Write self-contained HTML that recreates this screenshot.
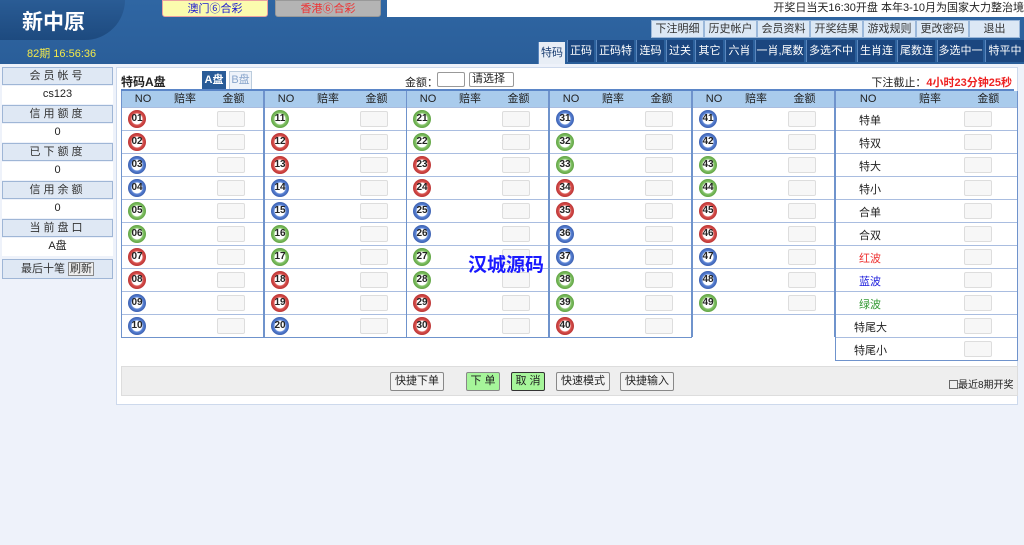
<!DOCTYPE html>
<html><head><meta charset="utf-8">
<style>
*{margin:0;padding:0;box-sizing:border-box}
body{width:1024px;height:545px;background:#eef2fa;font-family:"Liberation Sans","Noto Sans CJK SC",sans-serif;font-size:11px;color:#222;position:relative;overflow:hidden}
.a{position:absolute}
#hdr{left:0;top:0;width:1024px;height:64px;background:linear-gradient(#2f66a3,#2a5e99)}
#logo{left:0;top:0;width:125px;height:40px;background:linear-gradient(#2a5c95,#1d4a7f);border-bottom-right-radius:40px 40px}
#logo span{position:absolute;left:22px;top:6px;color:#fff;font-size:21px;font-weight:bold}
.tb{top:0;height:17px;border-radius:0 0 3px 3px;text-align:center;font-size:11px;line-height:16px}
#ticker{left:387px;top:0;width:637px;height:17px;background:#fff;font-size:11px;line-height:17px;text-align:right;white-space:nowrap;overflow:hidden}
.n1{top:20px;height:18px;background:#dce8f5;border:1px solid #9bb8da;text-align:center;line-height:16px;color:#333;font-size:11px}
.n2{top:40px;height:22px;background:#1b467f;color:#fff;text-align:center;line-height:22px;font-size:11px;border-left:1px solid #5a86bd}
#side{left:2px;top:67px;width:111px}
.sh{height:18px;background:#dfe8f4;border:1px solid #9fb6d6;text-align:center;line-height:17px;color:#333;letter-spacing:3px;margin-bottom:1px}
.sv{height:18px;background:#fff;text-align:center;line-height:17px;margin-bottom:1px}
#main{left:116px;top:67px;width:902px;height:338px;background:#fff;border:1px solid #cdd9ec}
.col{top:91px;width:143px;border:1px solid #6f93cc;border-top:none}
.col .h{height:16px;background:#a9cbec;display:flex;font-size:11px;line-height:16px}
.col .r{height:23px;border-top:1px solid #a9bde0;position:relative}
.b{position:absolute;left:6px;top:2px;width:18px;height:18px;border-radius:50%;font-size:10px;font-weight:bold;text-align:center;line-height:18px;color:#222}
.R{background:radial-gradient(circle,#fff 0 5px,#d9534f 6px,#b33 9px)}
.B{background:radial-gradient(circle,#fff 0 5px,#5b84d6 6px,#3a5fb0 9px)}
.G{background:radial-gradient(circle,#fff 0 5px,#86c46a 6px,#5ea341 9px)}
.i{position:absolute;left:95px;top:3px;width:28px;height:16px;border:1px solid #ddd;border-radius:2px;background:#f7f7f7}
.t{position:absolute;left:23px;top:4px}
.btn{top:372px;height:19px;border:1px solid #888;border-radius:2px;background:#f2f2f2;text-align:center;line-height:17px;font-size:11px}
</style></head><body>
<div id="hdr" class="a"></div>
<div id="logo" class="a"><span>新中原</span></div>
<div class="a" style="left:27px;top:45px;color:#f3e94a;font-size:11px">82期 16:56:36</div>
<div class="a tb" style="left:162px;width:106px;background:#fbfbae;border:1px solid #e9a0a0;color:#1a1ad0">澳门⑥合彩</div>
<div class="a tb" style="left:275px;width:106px;background:#b4b4b4;border:1px solid #999;color:#e33">香港⑥合彩</div>
<div id="ticker" class="a">开奖日当天16:30开盘 本年3-10月为国家大力整治境</div>
<div class="a n1" style="left:651px;width:53px">下注明细</div>
<div class="a n1" style="left:704px;width:53px">历史帐户</div>
<div class="a n1" style="left:757px;width:53px">会员资料</div>
<div class="a n1" style="left:810px;width:53px">开奖结果</div>
<div class="a n1" style="left:863px;width:53px">游戏规则</div>
<div class="a n1" style="left:916px;width:53px">更改密码</div>
<div class="a n1" style="left:969px;width:51px">退出</div>
<div class="a n2" style="left:538px;width:27px;background:#e8eef6;color:#1b3f73;top:42px;height:22px">特码</div>
<div class="a n2" style="left:567px;width:27px">正码</div>
<div class="a n2" style="left:596px;width:38px">正码特</div>
<div class="a n2" style="left:636px;width:28px">连码</div>
<div class="a n2" style="left:666px;width:27px">过关</div>
<div class="a n2" style="left:695px;width:28px">其它</div>
<div class="a n2" style="left:725px;width:28px">六肖</div>
<div class="a n2" style="left:755px;width:49px">一肖,尾数</div>
<div class="a n2" style="left:806px;width:49px">多选不中</div>
<div class="a n2" style="left:857px;width:38px">生肖连</div>
<div class="a n2" style="left:897px;width:38px">尾数连</div>
<div class="a n2" style="left:937px;width:46px">多选中一</div>
<div class="a n2" style="left:985px;width:39px">特平中</div>

<div id="side" class="a">
<div class="sh">会员帐号</div><div class="sv">cs123</div>
<div class="sh">信用额度</div><div class="sv">0</div>
<div class="sh">已下额度</div><div class="sv">0</div>
<div class="sh">信用余额</div><div class="sv">0</div>
<div class="sh">当前盘口</div><div class="sv">A盘</div>
<div class="sh" style="margin-top:3px;height:20px;letter-spacing:0;line-height:18px">最后十笔 <span style="border:1px solid #888;background:#eee;padding:0 1px">刷新</span></div>
</div>

<div id="main" class="a"></div>
<div class="a" style="left:121px;top:73px;font-size:12px;font-weight:bold">特码A盘</div>
<div class="a" style="left:202px;top:71px;width:24px;height:19px;background:#2a5c98;color:#fff;text-align:center;line-height:19px;font-weight:bold">A盘</div>
<div class="a" style="left:229px;top:71px;width:23px;height:19px;background:#eef3fa;border:1px solid #bcd;color:#8aa6cc;text-align:center;line-height:17px">B盘</div>
<div class="a" style="left:405px;top:74px">金额：</div>
<div class="a" style="left:437px;top:72px;width:28px;height:15px;border:1px solid #999;border-radius:2px;background:#fff"></div>
<div class="a" style="left:469px;top:72px;width:45px;height:15px;border:1px solid #999;border-radius:2px;background:#fff;line-height:13px;padding-left:2px;font-size:11px">请选择 ⌄</div>
<div class="a" style="right:12px;top:74px;white-space:nowrap">下注截止：<span style="color:#e22;font-weight:bold">4小时23分钟25秒</span></div>
<div class="a" style="left:121px;top:89px;width:893px;height:2px;background:#5b86c8"></div>

<div class="a col" style="left:121px"><div class="h"><span style="width:42px;text-align:center">NO</span><span style="width:42px;text-align:center">赔率</span><span style="width:55px;text-align:center">金额</span></div>
<div class="r"><span class="b R">01</span><span class="i"></span></div><div class="r"><span class="b R">02</span><span class="i"></span></div><div class="r"><span class="b B">03</span><span class="i"></span></div><div class="r"><span class="b B">04</span><span class="i"></span></div><div class="r"><span class="b G">05</span><span class="i"></span></div><div class="r"><span class="b G">06</span><span class="i"></span></div><div class="r"><span class="b R">07</span><span class="i"></span></div><div class="r"><span class="b R">08</span><span class="i"></span></div><div class="r"><span class="b B">09</span><span class="i"></span></div><div class="r"><span class="b B">10</span><span class="i"></span></div></div>
<div class="a col" style="left:264px"><div class="h"><span style="width:42px;text-align:center">NO</span><span style="width:42px;text-align:center">赔率</span><span style="width:55px;text-align:center">金额</span></div>
<div class="r"><span class="b G">11</span><span class="i"></span></div><div class="r"><span class="b R">12</span><span class="i"></span></div><div class="r"><span class="b R">13</span><span class="i"></span></div><div class="r"><span class="b B">14</span><span class="i"></span></div><div class="r"><span class="b B">15</span><span class="i"></span></div><div class="r"><span class="b G">16</span><span class="i"></span></div><div class="r"><span class="b G">17</span><span class="i"></span></div><div class="r"><span class="b R">18</span><span class="i"></span></div><div class="r"><span class="b R">19</span><span class="i"></span></div><div class="r"><span class="b B">20</span><span class="i"></span></div></div>
<div class="a col" style="left:406px"><div class="h"><span style="width:42px;text-align:center">NO</span><span style="width:42px;text-align:center">赔率</span><span style="width:55px;text-align:center">金额</span></div>
<div class="r"><span class="b G">21</span><span class="i"></span></div><div class="r"><span class="b G">22</span><span class="i"></span></div><div class="r"><span class="b R">23</span><span class="i"></span></div><div class="r"><span class="b R">24</span><span class="i"></span></div><div class="r"><span class="b B">25</span><span class="i"></span></div><div class="r"><span class="b B">26</span><span class="i"></span></div><div class="r"><span class="b G">27</span><span class="i"></span></div><div class="r"><span class="b G">28</span><span class="i"></span></div><div class="r"><span class="b R">29</span><span class="i"></span></div><div class="r"><span class="b R">30</span><span class="i"></span></div></div>
<div class="a col" style="left:549px"><div class="h"><span style="width:42px;text-align:center">NO</span><span style="width:42px;text-align:center">赔率</span><span style="width:55px;text-align:center">金额</span></div>
<div class="r"><span class="b B">31</span><span class="i"></span></div><div class="r"><span class="b G">32</span><span class="i"></span></div><div class="r"><span class="b G">33</span><span class="i"></span></div><div class="r"><span class="b R">34</span><span class="i"></span></div><div class="r"><span class="b R">35</span><span class="i"></span></div><div class="r"><span class="b B">36</span><span class="i"></span></div><div class="r"><span class="b B">37</span><span class="i"></span></div><div class="r"><span class="b G">38</span><span class="i"></span></div><div class="r"><span class="b G">39</span><span class="i"></span></div><div class="r"><span class="b R">40</span><span class="i"></span></div></div>
<div class="a col" style="left:692px;border-bottom:none"><div class="h"><span style="width:42px;text-align:center">NO</span><span style="width:42px;text-align:center">赔率</span><span style="width:55px;text-align:center">金额</span></div>
<div class="r"><span class="b B">41</span><span class="i"></span></div><div class="r"><span class="b B">42</span><span class="i"></span></div><div class="r"><span class="b G">43</span><span class="i"></span></div><div class="r"><span class="b G">44</span><span class="i"></span></div><div class="r"><span class="b R">45</span><span class="i"></span></div><div class="r"><span class="b R">46</span><span class="i"></span></div><div class="r"><span class="b B">47</span><span class="i"></span></div><div class="r"><span class="b B">48</span><span class="i"></span></div><div class="r"><span class="b G">49</span><span class="i"></span></div><div class="r"></div></div>
<div class="a col" style="left:835px;width:183px"><div class="h"><span style="width:65px;text-align:center">NO</span><span style="width:60px;text-align:center">赔率</span><span style="width:58px;text-align:center">金额</span></div>
<div class="r"><span class="t">特单</span><span class="i" style="left:128px"></span></div><div class="r"><span class="t">特双</span><span class="i" style="left:128px"></span></div><div class="r"><span class="t">特大</span><span class="i" style="left:128px"></span></div><div class="r"><span class="t">特小</span><span class="i" style="left:128px"></span></div><div class="r"><span class="t">合单</span><span class="i" style="left:128px"></span></div><div class="r"><span class="t">合双</span><span class="i" style="left:128px"></span></div><div class="r"><span class="t" style="color:#e33">红波</span><span class="i" style="left:128px"></span></div><div class="r"><span class="t" style="color:#22d">蓝波</span><span class="i" style="left:128px"></span></div><div class="r"><span class="t" style="color:#393">绿波</span><span class="i" style="left:128px"></span></div><div class="r"><span class="t" style="left:18px">特尾大</span><span class="i" style="left:128px"></span></div><div class="r"><span class="t" style="left:18px">特尾小</span><span class="i" style="left:128px"></span></div></div>

<div class="a" style="left:468px;top:250px;color:#1a1aff;font-size:19px;font-weight:bold">汉城源码</div>

<div class="a" style="left:121px;top:366px;width:897px;height:30px;background:#eee;border:1px solid #ddd"></div>
<div class="a btn" style="left:390px;width:54px">快捷下单</div>
<div class="a btn" style="left:466px;width:34px;background:#a6f59a">下 单</div>
<div class="a btn" style="left:511px;width:34px;background:#a6f59a;border:1px solid #333">取 消</div>
<div class="a btn" style="left:556px;width:54px">快速模式</div>
<div class="a btn" style="left:620px;width:54px">快捷输入</div>
<div class="a" style="left:949px;top:376px;font-size:10px"><span style="display:inline-block;width:9px;height:9px;border:1px solid #666;vertical-align:-1px"></span>最近8期开奖</div>
</body></html>
